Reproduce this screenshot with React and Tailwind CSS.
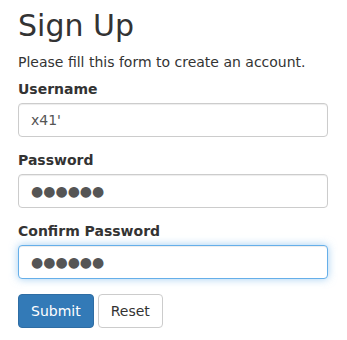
import React from "react";

export default function App() {
  const font = { fontFamily: '"DejaVu Sans", sans-serif' };
  const inputBase =
    "block w-[310px] h-[34px] px-[12px] py-[6px] text-[14px] leading-[20px] text-[#555] bg-white border rounded-[4px] outline-none";
  return (
    <div style={font} className="bg-white text-[#333] pl-[18px] pt-[9px] w-[347px] h-[340px]">
      <h2 className="text-[30px] leading-[33px] font-medium mb-[10px]">Sign Up</h2>
      <p className="text-[14px] leading-[20px] mb-[7px]">Please fill this form to create an account.</p>
      <div className="mb-[13px]">
        <label className="block text-[14px] leading-[20px] font-bold mb-[4px]">Username</label>
        <input
          type="text"
          defaultValue="x41'"
          className={inputBase + " border-[#ccc] shadow-[inset_0_1px_1px_rgba(0,0,0,0.075)]"}
        />
      </div>
      <div className="mb-[13px]">
        <label className="block text-[14px] leading-[20px] font-bold mb-[4px]">Password</label>
        <input
          type="text"
          defaultValue="●●●●●●"
          className={inputBase + " border-[#ccc] shadow-[inset_0_1px_1px_rgba(0,0,0,0.075)]"}
        />
      </div>
      <div className="mb-[15px]">
        <label className="block text-[14px] leading-[20px] font-bold mb-[4px]">Confirm Password</label>
        <input
          type="text"
          defaultValue="●●●●●●"
          className={
            inputBase +
            " border-[#66afe9] shadow-[inset_0_1px_1px_rgba(0,0,0,0.075),0_0_8px_rgba(102,175,233,0.6)]"
          }
        />
      </div>
      <div className="flex gap-[4px]">
        <button className="h-[34px] px-[12px] text-[14px] leading-[20px] text-white bg-[#337ab7] border border-[#2e6da4] rounded-[4px]">
          Submit
        </button>
        <button className="h-[34px] px-[12px] text-[14px] leading-[20px] text-[#333] bg-white border border-[#ccc] rounded-[4px]">
          Reset
        </button>
      </div>
    </div>
  );
}
